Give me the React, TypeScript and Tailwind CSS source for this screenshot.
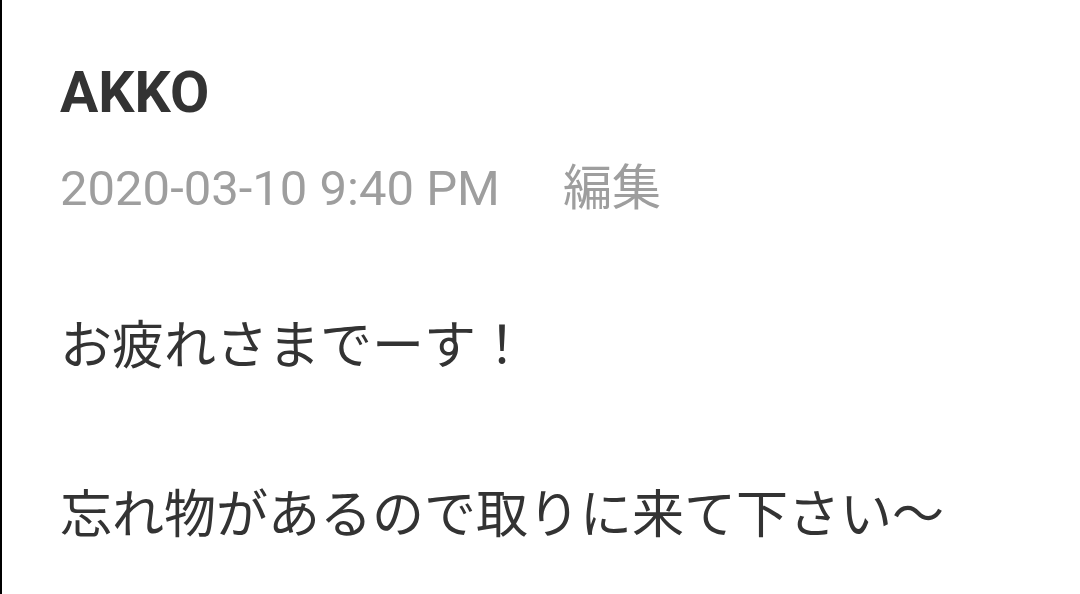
function App() {
  return (
    <main className="h-[594px] w-[1080px] overflow-hidden border-l-2 border-black bg-white pl-[58px]">
      <h1 className="mt-[64px] font-['Roboto',sans-serif] text-[57px] leading-none font-bold text-[#333333]">
        AKKO
      </h1>
      <div className="mt-[38px] flex items-baseline gap-[63px] text-[49px] leading-none text-[#9e9e9e]">
        <span className="font-['Roboto',sans-serif]">2020-03-10 9:40 PM</span>
        <span className="font-['Noto_Sans_CJK_JP',sans-serif]">編集</span>
      </div>
      <div className="mt-[103px] font-['Noto_Sans_CJK_JP',sans-serif] text-[52px] leading-none text-[#333333]">
        <p>お疲れさまでーす！</p>
        <p className="mt-[117px]">忘れ物があるので取りに来て下さい〜</p>
      </div>
    </main>
  );
}

export default App;
